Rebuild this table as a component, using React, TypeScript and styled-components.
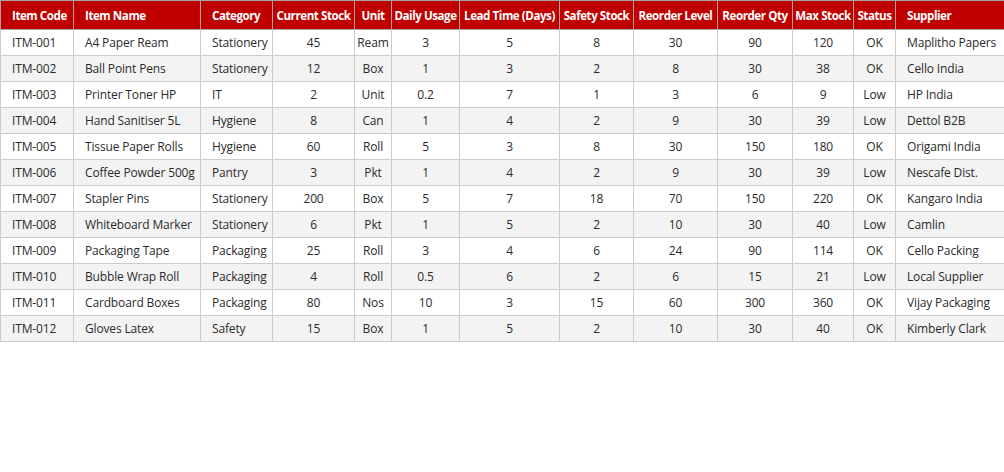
import React from 'react';
import styled, { createGlobalStyle } from 'styled-components';

const GlobalStyle = createGlobalStyle`
  html, body {
    margin: 0;
    padding: 0;
    background: #ffffff;
  }
  body {
    font-family: 'Open Sans', 'Noto Sans', Arial, sans-serif;
  }
`;

type Align = 'left' | 'center';

interface Column {
  key: string;
  title: string;
  width: number;
  align: Align;
}

const columns: Column[] = [
  { key: 'code', title: 'Item Code', width: 73, align: 'left' },
  { key: 'name', title: 'Item Name', width: 127, align: 'left' },
  { key: 'category', title: 'Category', width: 72, align: 'left' },
  { key: 'stock', title: 'Current Stock', width: 82, align: 'center' },
  { key: 'unit', title: 'Unit', width: 37, align: 'center' },
  { key: 'usage', title: 'Daily Usage', width: 68, align: 'center' },
  { key: 'lead', title: 'Lead Time (Days)', width: 100, align: 'center' },
  { key: 'safety', title: 'Safety Stock', width: 74, align: 'center' },
  { key: 'level', title: 'Reorder Level', width: 84, align: 'center' },
  { key: 'qty', title: 'Reorder Qty', width: 75, align: 'center' },
  { key: 'max', title: 'Max Stock', width: 61, align: 'center' },
  { key: 'status', title: 'Status', width: 42, align: 'center' },
  { key: 'supplier', title: 'Supplier', width: 109, align: 'left' },
];

const rows: string[][] = [
  ['ITM-001', 'A4 Paper Ream', 'Stationery', '45', 'Ream', '3', '5', '8', '30', '90', '120', 'OK', 'Maplitho Papers'],
  ['ITM-002', 'Ball Point Pens', 'Stationery', '12', 'Box', '1', '3', '2', '8', '30', '38', 'OK', 'Cello India'],
  ['ITM-003', 'Printer Toner HP', 'IT', '2', 'Unit', '0.2', '7', '1', '3', '6', '9', 'Low', 'HP India'],
  ['ITM-004', 'Hand Sanitiser 5L', 'Hygiene', '8', 'Can', '1', '4', '2', '9', '30', '39', 'Low', 'Dettol B2B'],
  ['ITM-005', 'Tissue Paper Rolls', 'Hygiene', '60', 'Roll', '5', '3', '8', '30', '150', '180', 'OK', 'Origami India'],
  ['ITM-006', 'Coffee Powder 500g', 'Pantry', '3', 'Pkt', '1', '4', '2', '9', '30', '39', 'Low', 'Nescafe Dist.'],
  ['ITM-007', 'Stapler Pins', 'Stationery', '200', 'Box', '5', '7', '18', '70', '150', '220', 'OK', 'Kangaro India'],
  ['ITM-008', 'Whiteboard Marker', 'Stationery', '6', 'Pkt', '1', '5', '2', '10', '30', '40', 'Low', 'Camlin'],
  ['ITM-009', 'Packaging Tape', 'Packaging', '25', 'Roll', '3', '4', '6', '24', '90', '114', 'OK', 'Cello Packing'],
  ['ITM-010', 'Bubble Wrap Roll', 'Packaging', '4', 'Roll', '0.5', '6', '2', '6', '15', '21', 'Low', 'Local Supplier'],
  ['ITM-011', 'Cardboard Boxes', 'Packaging', '80', 'Nos', '10', '3', '15', '60', '300', '360', 'OK', 'Vijay Packaging'],
  ['ITM-012', 'Gloves Latex', 'Safety', '15', 'Box', '1', '5', '2', '10', '30', '40', 'OK', 'Kimberly Clark'],
];

const Sheet = styled.table`
  width: 1004px;
  border-collapse: collapse;
  table-layout: fixed;
  font-size: 12px;
  color: #2b2b2b;
`;

const HeadCell = styled.th<{ $align: Align }>`
  height: 28px;
  padding: ${(p) => (p.$align === 'left' ? '0 1px 0 11px' : '0')};
  background: #c00000;
  color: #ffffff;
  font-size: 11.6px;
  font-weight: 700;
  letter-spacing: -0.45px;
  text-align: ${(p) => p.$align};
  white-space: nowrap;
  overflow: hidden;
  border: 1px solid #a6a6a6;
`;

const Row = styled.tr<{ $striped: boolean }>`
  background: ${(p) => (p.$striped ? '#f3f3f3' : '#ffffff')};
`;

const Cell = styled.td<{ $align: Align }>`
  height: 25px;
  padding: ${(p) => (p.$align === 'left' ? '0 1px 0 11px' : '0 1px')};
  text-align: ${(p) => p.$align};
  letter-spacing: -0.15px;
  white-space: nowrap;
  overflow: hidden;
  border: 1px solid #cccccc;
`;

const App = () => (
  <>
    <GlobalStyle />
    <Sheet>
      <colgroup>
        {columns.map((c) => (
          <col key={c.key} style={{ width: c.width }} />
        ))}
      </colgroup>
      <thead>
        <tr>
          {columns.map((c) => (
            <HeadCell key={c.key} $align={c.align}>
              {c.title}
            </HeadCell>
          ))}
        </tr>
      </thead>
      <tbody>
        {rows.map((r, i) => (
          <Row key={r[0]} $striped={i % 2 === 1}>
            {r.map((v, j) => (
              <Cell key={columns[j].key} $align={columns[j].align}>
                {v}
              </Cell>
            ))}
          </Row>
        ))}
      </tbody>
    </Sheet>
  </>
);

export default App;
